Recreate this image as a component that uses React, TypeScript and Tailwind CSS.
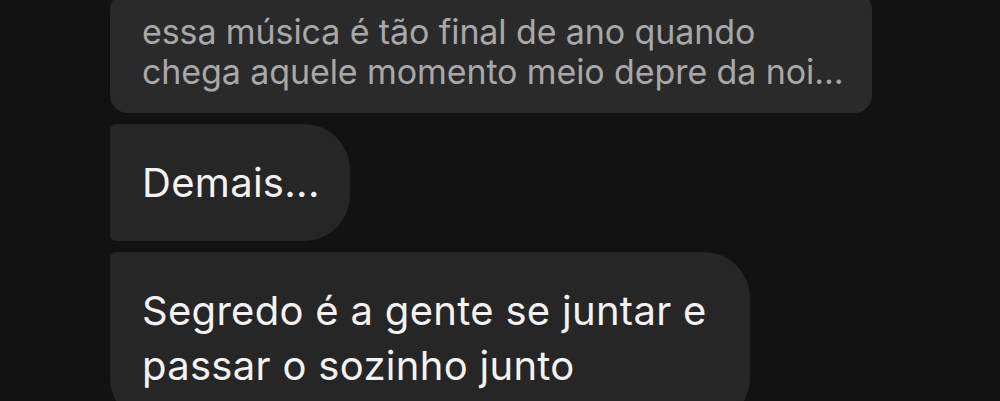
const font = "font-['Inter','Noto_Sans',sans-serif]";

const ReplyPreview = () => (
  <div className="-mt-[8px] w-[762px] rounded-[18px] bg-[#2a2a2a] pl-[32px] pr-[24px] pt-[20px] pb-[21px] text-[34px] leading-[40px] tracking-[-0.1px] text-[#a8a8a8]">
    <div className="whitespace-nowrap">essa música é tão final de ano quando</div>
    <div className="whitespace-nowrap">chega aquele momento meio depre da noi…</div>
  </div>
);

const Bubble = ({ lines, width, corners }: { lines: string[]; width: string; corners: string }) => (
  <div className={`${width} ${corners} bg-[#262626] pl-[32px] pt-[31px] pb-[31px] text-[40px] leading-[55px] tracking-[0.3px] text-[#f2f2f2]`}>
    {lines.map((line) => (
      <div key={line} className="whitespace-nowrap">
        {line}
      </div>
    ))}
  </div>
);

export default function App() {
  return (
    <div className={`h-[401px] w-[1000px] overflow-hidden bg-[#121212] ${font}`}>
      <div className="flex flex-col items-start gap-[11px] pl-[110px]">
        <ReplyPreview />
        <Bubble
          lines={["Demais..."]}
          width="w-[240px]"
          corners="rounded-l-[6px] rounded-r-[46px]"
        />
        <Bubble
          lines={["Segredo é a gente se juntar e", "passar o sozinho junto"]}
          width="w-[640px]"
          corners="rounded-tl-[6px] rounded-tr-[46px] rounded-bl-[46px] rounded-br-[46px]"
        />
      </div>
    </div>
  );
}
